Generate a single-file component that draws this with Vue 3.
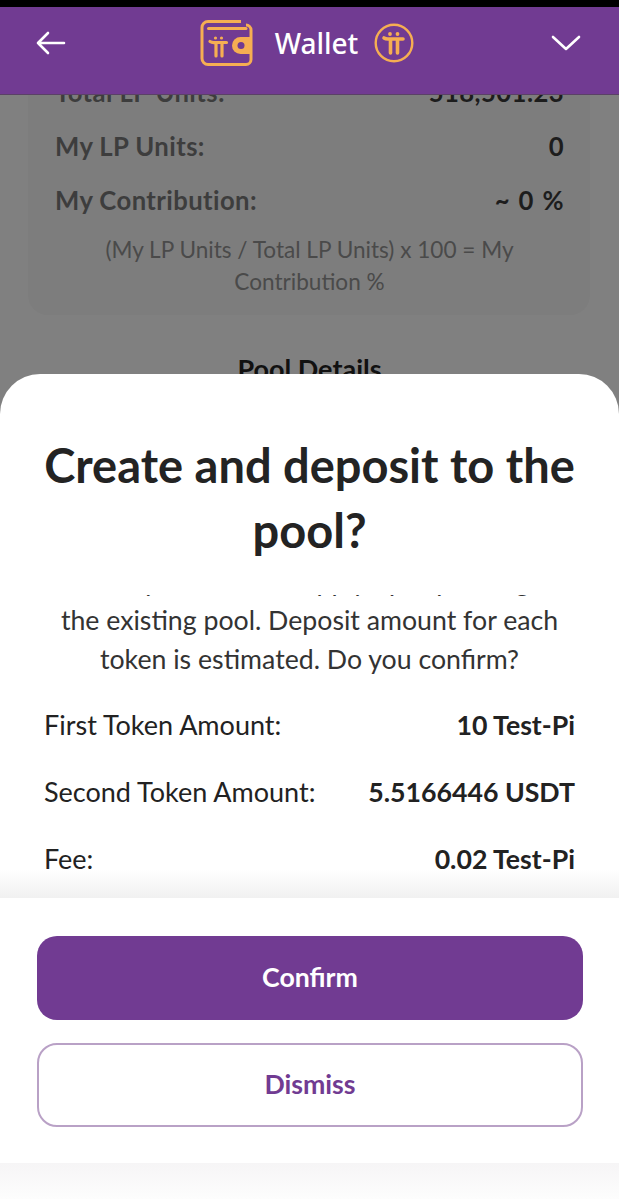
<template>
  <div class="phone">
    <div class="status"></div>
    <header class="topbar">
      <svg class="back" width="30" height="24" viewBox="0 0 30 24" fill="none" stroke="#fff" stroke-width="2.6" stroke-linecap="round" stroke-linejoin="round">
        <path d="M12 2 2 12l10 10M2 12h26" />
      </svg>
      <div class="brand">
        <svg width="54" height="48" viewBox="0 0 54 48" fill="none" stroke="#f6ae52">
          <path d="M41 2.500H8A6 6 0 0 0 2 8.500v31a6 6 0 0 0 6 6h38a5 5 0 0 0 5-5V11a5 5 0 0 0-5-5" stroke-width="3" />
          <path d="M8.500 9.500H46" stroke-width="3" stroke-linecap="round" />
          <path d="M52 18H40.500a8.500 8.500 0 0 0 0 17H52z" fill="#f6ae52" stroke="none" />
          <circle cx="41" cy="26.500" r="3.500" fill="#713b92" stroke="none" />
          <path d="M10 22.500c1.500 1 3 1.200 5 1h11.500M16 24v13M22 24v13" stroke-width="3.200" stroke-linecap="round" />
          <circle cx="15.500" cy="19" r="1.600" fill="#f6ae52" stroke="none" />
          <circle cx="21.500" cy="19" r="1.600" fill="#f6ae52" stroke="none" />
        </svg>
        <span class="brand-name">Wallet</span>
        <svg width="40" height="40" viewBox="0 0 40 40" fill="none" stroke="#f6ae52">
          <circle cx="20" cy="20" r="18.300" stroke-width="2.400" />
          <path d="M10 15c1.500 1 3 1.200 5 1h14M16.500 16.500V30M23.500 16.500V30" stroke-width="3.600" stroke-linecap="round" />
          <circle cx="16" cy="11" r="1.900" fill="#f6ae52" stroke="none" />
          <circle cx="23.500" cy="11" r="1.900" fill="#f6ae52" stroke="none" />
        </svg>
      </div>
      <svg class="chevron" width="30" height="16" viewBox="0 0 30 16" fill="none" stroke="#fff" stroke-width="2.600" stroke-linecap="round" stroke-linejoin="round">
        <path d="M2 2l13 12L28 2" />
      </svg>
    </header>

    <main class="backdrop">
      <section class="card">
        <div v-for="row in poolRows" :key="row.label" class="card-row">
          <span class="card-label">{{ row.label }}</span>
          <span class="card-value">{{ row.value }}</span>
        </div>
        <p class="hint">(My LP Units / Total LP Units) x 100 = My Contribution %</p>
      </section>
      <h2 class="pool-title">Pool Details</h2>
    </main>

    <section class="sheet">
      <h1 class="sheet-title">Create and deposit to the pool?</h1>
      <div class="sheet-scroll">
        <p class="message">You may add to the supply by depositing to<br />the existing pool. Deposit amount for each<br />token is estimated. Do you confirm?</p>
        <div v-for="row in tokenRows" :key="row.label" class="token-row">
          <span class="token-label">{{ row.label }}</span>
          <span class="token-value">{{ row.value }}</span>
        </div>
      </div>
      <div class="actions">
        <button class="btn btn-primary">Confirm</button>
        <button class="btn btn-outline">Dismiss</button>
      </div>
      <div class="sheet-foot"></div>
    </section>
  </div>
</template>

<script setup>
const poolRows = [
  { label: 'Total LP Units:', value: '518,501.23' },
  { label: 'My LP Units:', value: '0' },
  { label: 'My Contribution:', value: '~ 0 %' },
]

const tokenRows = [
  { label: 'First Token Amount:', value: '10 Test-Pi' },
  { label: 'Second Token Amount:', value: '5.5166446 USDT' },
  { label: 'Fee:', value: '0.02 Test-Pi' },
]
</script>

<style>
html, body { background: #808080; }
</style>

<style scoped>
.phone {
  position: relative; width: 619px; height: 1199px; overflow: hidden;
  display: flex; flex-direction: column;
  background: #808080; font-family: "Lato", "Noto Sans", sans-serif;
}

.status { height: 7px; background: #000; flex: none; }

.topbar {
  position: relative; z-index: 2; flex: none;
  height: 88px; box-sizing: border-box; padding: 0 38px 16px 36px;
  display: flex; align-items: center; justify-content: space-between;
  background: #713b92; border-bottom: 1px solid #5b4166;
}

.brand { display: flex; align-items: center; margin-right: 3px; }
.brand-name {
  margin: 0 16px 0 21px;
  font-family: "Noto Sans", sans-serif; font-size: 28px; font-weight: 500; color: #fff;
}

.backdrop { flex: 1; min-height: 0; overflow: hidden; }

.card {
  margin: -30px 29px 0 28px; padding: 0 26px 17px 27px;
  background: #7d7d7d; border-radius: 20px;
}

.card-row {
  height: 54px; display: flex; align-items: center; justify-content: space-between;
  font-size: 25.7px; letter-spacing: 0.4px;
}
.card-label { font-weight: 700; color: #3d3d3d; }
.card-value { font-weight: 700; color: #1d1d1d; word-spacing: 2px; }

.hint {
  margin: 7px 16px 0; text-align: center;
  font-size: 22.6px; line-height: 32px; color: #4a4a4a;
}

.pool-title {
  margin: 37px 0 0; text-align: center;
  font-size: 27px; line-height: 34px; font-weight: 700; color: #111;
}

.sheet {
  position: absolute; left: 0; right: 0; top: 374px; bottom: 0; z-index: 3;
  display: flex; flex-direction: column;
  background: #fff; border-radius: 40px 40px 0 0; overflow: hidden;
}

.sheet-title {
  flex: none; height: 221px; box-sizing: border-box; margin: 0; padding: 59px 30px 0;
  text-align: center; font-size: 47px; line-height: 65px; font-weight: 700; color: #232323;
}

.sheet-scroll {
  flex: none; height: 303px; overflow: hidden; position: relative;
  padding: 0 44px;
}
.sheet-scroll::after {
  content: ""; position: absolute; left: 0; right: 0; bottom: 0; height: 28px;
  background: linear-gradient(rgba(240, 240, 240, 0), #f1f1f1);
}

.message {
  margin: -33px 0 0; text-align: center;
  font-size: 26.7px; line-height: 39px; color: #333;
}

.token-row {
  position: relative; z-index: 1;
  height: 67px; display: flex; align-items: center; justify-content: space-between;
  color: #222;
}
.message + .token-row { margin-top: 12px; }
.token-label { font-size: 27px; }
.token-value { font-size: 26.7px; font-weight: 700; }

.actions {
  flex: none; height: 265px; box-sizing: border-box; padding: 38px 36px 0 37px;
  display: flex; flex-direction: column; gap: 23px;
  background: #fff;
}

.btn {
  flex: none; height: 84px; border-radius: 20px; font-family: inherit;
  font-size: 26.7px; font-weight: 700; padding: 0 0 3px;
}
.btn-primary { background: #713b92; border: none; color: #fff; }
.btn-outline { background: #fff; border: 2px solid #b9a1c6; color: #713b92; }

.sheet-foot {
  flex: 1; background: linear-gradient(#f6f5f6, #fdfdfd);
}
</style>
